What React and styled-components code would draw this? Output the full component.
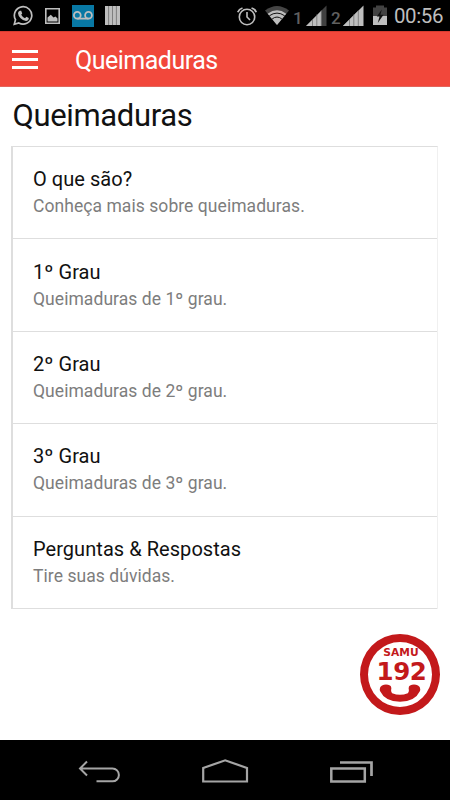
import React from "react";
import styled, { createGlobalStyle } from "styled-components";

const GlobalStyle = createGlobalStyle`
  * {
    box-sizing: border-box;
  }
  body {
    margin: 0;
    background: #fff;
    font-family: Roboto, "Liberation Sans", sans-serif;
  }
`;

const Screen = styled.div`
  position: relative;
  display: flex;
  flex-direction: column;
  width: 450px;
  height: 800px;
  overflow: hidden;
  background: #fff;
`;

const StatusBar = styled.div`
  display: flex;
  justify-content: space-between;
  height: 31px;
  padding: 0 7px 0 13px;
  background: #000;
`;

const StatusGroup = styled.div`
  display: flex;
  height: 32px;
`;

const StatusIcon = styled.svg`
  display: block;
  flex: none;
  height: 32px;
  margin-right: ${(props) => props.$gap || 0}px;
`;

const SimNumber = styled.span`
  width: 8px;
  margin-right: ${(props) => props.$gap}px;
  color: #606060;
  font-size: 17px;
  font-weight: 500;
  line-height: 36px;
`;

const Clock = styled.span`
  width: 49px;
  color: #bebebe;
  font-size: 20.5px;
  line-height: 33px;
  letter-spacing: -0.4px;
  white-space: nowrap;
`;

const Toolbar = styled.header`
  display: flex;
  align-items: center;
  height: 56px;
  padding-left: 12px;
  background: #f2473b;
  border-top: 1px solid #d83b30;
  border-bottom: 1px solid #e3655c;
`;

const MenuButton = styled.button`
  display: flex;
  flex-direction: column;
  gap: 5px;
  width: 26px;
  margin-right: 37px;
  padding: 0;
  border: 0;
  background: none;
`;

const MenuLine = styled.span`
  height: 3px;
  background: #fff;
`;

const ToolbarTitle = styled.span`
  padding-top: 3px;
  color: #fff;
  font-size: 25px;
  line-height: 30px;
  letter-spacing: -0.5px;
`;

const Content = styled.main`
  flex: 1;
  padding: 10px 12px 0 11px;
`;

const Heading = styled.h1`
  height: 49px;
  margin: 0;
  padding-left: 1.5px;
  color: #111;
  font-size: 31px;
  font-weight: 400;
  line-height: 37px;
  letter-spacing: -0.35px;
`;

const List = styled.div`
  border-left: 2px solid #dedede;
  border-right: 1px solid #f0f0f0;
  border-top: 1px solid #dedede;
`;

const Item = styled.div`
  height: 92.4px;
  padding: 19.2px 20px 0 20px;
  border-bottom: 1px solid #dedede;
`;

const ItemTitle = styled.div`
  color: #111;
  font-size: 20px;
  line-height: 27px;
  letter-spacing: 0.05px;
`;

const ItemText = styled.div`
  color: #7d7d7d;
  font-size: 17.5px;
  line-height: 26px;
  letter-spacing: 0.06px;
`;

const CallButton = styled.button`
  position: absolute;
  right: 10px;
  bottom: 85px;
  display: flex;
  flex-direction: column;
  align-items: center;
  width: 80px;
  height: 81px;
  padding: 0;
  border: 8px solid #c3191b;
  border-radius: 50%;
  background: #fff;
  color: #c3191b;
  font-family: "DejaVu Sans", sans-serif;
  font-weight: 700;
`;

const CallName = styled.span`
  margin-top: 4px;
  padding-left: 2px;
  font-size: 10.7px;
  line-height: 13px;
`;

const CallNumber = styled.span`
  padding-left: 3px;
  font-size: 24.5px;
  line-height: 25px;
  letter-spacing: -0.4px;
`;

const NavBar = styled.nav`
  display: flex;
  align-items: center;
  justify-content: space-between;
  height: 60px;
  padding: 2px 77px 0 77px;
  background: #000;
`;

const items = [
  { title: "O que são?", text: "Conheça mais sobre queimaduras." },
  { title: "1º Grau", text: "Queimaduras de 1º grau." },
  { title: "2º Grau", text: "Queimaduras de 2º grau." },
  { title: "3º Grau", text: "Queimaduras de 3º grau." },
  { title: "Perguntas & Respostas", text: "Tire suas dúvidas." },
];

function Signal({ gap, weak }) {
  return (
    <StatusIcon width="21" viewBox="0 0 21 32" $gap={gap}>
      <path d="M0 26L20.5 5.5V26Z" fill={weak ? "#404040" : "#bebebe"} />
      <path d="M0 26L15.5 10.5V26Z" fill="#bebebe" />
      <path d="M6.5 19V26M10.8 14V26M15.3 10V26" stroke="#555" strokeWidth="0.6" />
    </StatusIcon>
  );
}

function Status() {
  return (
    <StatusBar>
      <StatusGroup>
        <StatusIcon width="20" viewBox="0 0 20 32" $gap={12}>
          <path
            d="M1.3 24.3L2.5 19.7A8.7 8.7 0 1 1 5.8 23Z"
            fill="none"
            stroke="#bebebe"
            strokeWidth="1.7"
          />
          <path
            d="M6.9 10.7L8.2 10.8L9.2 13.4L8.2 14.8Q9.5 17.2 12 18.2L13.4 16.8L15.8 18Q15.8 20.7 13 21Q10.5 21 7.6 18.2Q5 15.5 5 13.3Q5 11.5 6.9 10.7Z"
            fill="#bebebe"
          />
        </StatusIcon>
        <StatusIcon width="15" viewBox="0 0 15 32" $gap={12}>
          <path d="M0.8 8.8H14.2V23.2H0.8Z" fill="none" stroke="#bebebe" strokeWidth="1.6" />
          <path d="M2.5 21.5V17.5L5.8 14.8L8.5 17.5L10.5 16.5L12.5 18.5V21.5Z" fill="#bebebe" />
        </StatusIcon>
        <StatusIcon width="22" viewBox="0 0 22 32" $gap={11}>
          <rect y="5" width="22" height="22" fill="#0878a4" />
          <g fill="none" stroke="#bebebe" strokeWidth="1.8">
            <circle cx="5.3" cy="15.2" r="3.4" />
            <circle cx="16.5" cy="15.2" r="3.4" />
            <path d="M5.3 18.6H16.5" />
          </g>
        </StatusIcon>
        <StatusIcon width="15" viewBox="0 0 15 32">
          <rect y="6" width="15" height="19" fill="#bebebe" />
          <path d="M3.6 6V25M7.5 6V25M11.4 6V25" stroke="#777" strokeWidth="0.9" />
        </StatusIcon>
      </StatusGroup>
      <StatusGroup>
        <StatusIcon width="20" viewBox="0 0 20 32" $gap={8}>
          <g fill="none" stroke="#bebebe" strokeWidth="1.6">
            <circle cx="10" cy="17" r="7.7" />
            <path d="M10 12V17L13 20" />
            <path d="M0.8 12.2Q2 9 5.5 8M19.2 12.2Q18 9 14.5 8" strokeWidth="1.8" />
          </g>
        </StatusIcon>
        <StatusIcon width="24" viewBox="0 0 24 32" $gap={4}>
          <path d="M0 10.5Q12 1.5 24 10.5L12 25Z" fill="#454545" />
          <path d="M2.7 13.7Q12 7 21.3 13.7L12 25Z" fill="#bebebe" />
          <path
            d="M4.3 15.8Q12 10.4 19.7 15.8M7.2 18.9Q12 15.2 16.8 18.9"
            fill="none"
            stroke="#111"
            strokeWidth="1"
          />
        </StatusIcon>
        <SimNumber $gap={5}>1</SimNumber>
        <Signal gap={4} weak />
        <SimNumber $gap={4}>2</SimNumber>
        <Signal gap={9} />
        <StatusIcon width="14" viewBox="0 0 14 32" $gap={7}>
          <path d="M0 7.5H3V5.5H11V7.5H14V25H0Z" fill="#424242" />
          <rect y="16" width="14" height="9" fill="#bebebe" />
          <path d="M8.8 9.5L3.8 16.5H6.5L4.8 23L10.5 14.8H7.4Z" fill="#111" />
        </StatusIcon>
        <Clock>00:56</Clock>
      </StatusGroup>
    </StatusBar>
  );
}

function EmergencyCall() {
  return (
    <CallButton>
      <CallName>SAMU</CallName>
      <CallNumber>192</CallNumber>
      <svg width="42" height="18" viewBox="0 0 42 18">
        <path
          d="M3 1.6Q7 -0.4 11 1.6Q12.8 2.8 12.2 5.4Q11.8 8 13.2 9.2Q21 12.4 28.8 9.2Q30.2 8 29.8 5.4Q29.2 2.8 31 1.6Q35 -0.4 39 1.6Q42 3.4 41 7Q36 17.6 21 17.8Q6 17.6 1 7Q0 3.4 3 1.6Z"
          fill="#c3191b"
        />
      </svg>
    </CallButton>
  );
}

function Navigation() {
  return (
    <NavBar>
      <svg width="44" height="26" viewBox="0 0 44 26" fill="none" stroke="#a5a5a5" strokeWidth="2">
        <path d="M10 3.5L3 10.5L10 17.5M3 10.5H35.5A6 6 0 0 1 35.5 23.3H19.5" />
      </svg>
      <svg width="48" height="26" viewBox="0 0 48 26" fill="none" stroke="#a5a5a5" strokeWidth="2.2">
        <path d="M2.2 23.5V10L24.2 2.3L46 10V23.5Z" />
      </svg>
      <svg width="44" height="26" viewBox="0 0 44 26" fill="none" stroke="#a5a5a5" strokeWidth="2.5">
        <path d="M2.3 10.5H35.8V23.4H2.3Z" />
        <path d="M11 4.5H42.5V18" strokeWidth="2.7" />
      </svg>
    </NavBar>
  );
}

function App() {
  return (
    <Screen>
      <GlobalStyle />
      <Status />
      <Toolbar>
        <MenuButton aria-label="Menu">
          <MenuLine />
          <MenuLine />
          <MenuLine />
        </MenuButton>
        <ToolbarTitle>Queimaduras</ToolbarTitle>
      </Toolbar>
      <Content>
        <Heading>Queimaduras</Heading>
        <List>
          {items.map((item) => (
            <Item key={item.title}>
              <ItemTitle>{item.title}</ItemTitle>
              <ItemText>{item.text}</ItemText>
            </Item>
          ))}
        </List>
      </Content>
      <EmergencyCall />
      <Navigation />
    </Screen>
  );
}

export default App;
